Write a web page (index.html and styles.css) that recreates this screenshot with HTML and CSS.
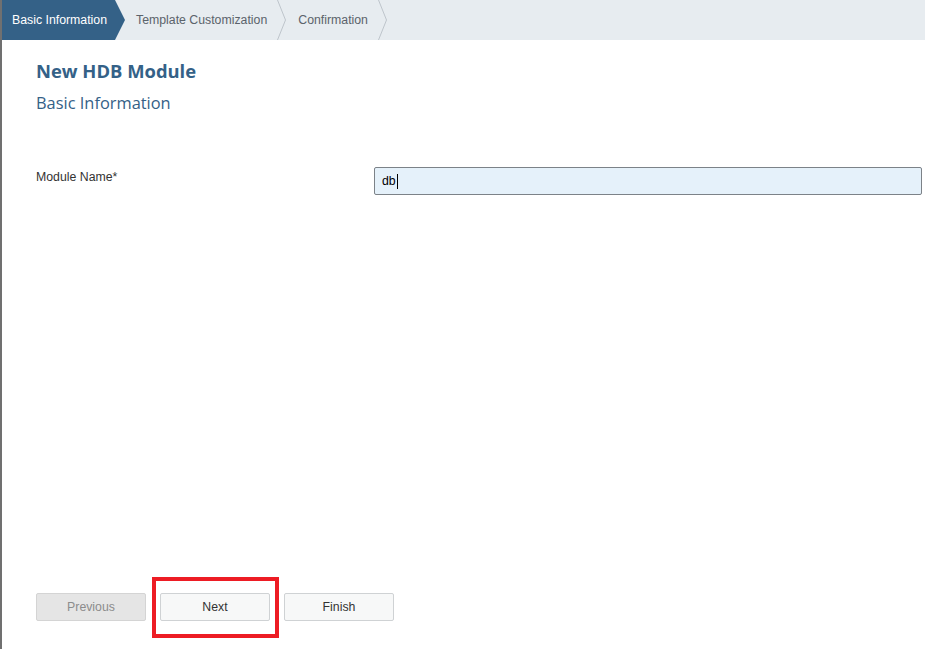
FILE: index.html
```html
<!DOCTYPE html>
<html lang="en">
<head>
<meta charset="utf-8">
<title>New HDB Module</title>
<link rel="stylesheet" href="styles.css">
</head>
<body>
<div class="page">
  <nav class="steps">
    <div class="step step-active">
      <span class="step-label">Basic Information</span>
      <svg class="arrow" width="10" height="40" viewBox="0 0 10 40"><polygon points="0,0 10,20 0,40" fill="#346187"/></svg>
    </div>
    <div class="step">
      <span class="step-label">Template Customization</span>
      <svg class="chev" width="10" height="40" viewBox="0 0 10 40"><polyline points="0.5,0 8.5,20 0.5,40" fill="none" stroke="#bfc5cb" stroke-width="1"/></svg>
    </div>
    <div class="step">
      <span class="step-label">Confirmation</span>
      <svg class="chev" width="10" height="40" viewBox="0 0 10 40"><polyline points="0.5,0 8.5,20 0.5,40" fill="none" stroke="#bfc5cb" stroke-width="1"/></svg>
    </div>
  </nav>
  <main class="content">
    <h1 class="title">New HDB Module</h1>
    <h2 class="subtitle">Basic Information</h2>
    <div class="form-row">
      <label class="field-label" for="modname">Module Name*</label>
      <div class="field-input"><span class="value">db</span><span class="caret"></span></div>
    </div>
  </main>
  <footer class="actions">
    <button class="btn btn-disabled">Previous</button>
    <div class="highlight-wrap">
      <button class="btn">Next</button>
      <div class="highlight"></div>
    </div>
    <button class="btn">Finish</button>
  </footer>
</div>
</body>
</html>
```
FILE: styles.css
```css
html, body {
  margin: 0;
  padding: 0;
  height: 100%;
  background: #ffffff;
}
body {
  font-family: "Liberation Sans", Arial, sans-serif;
  overflow: hidden;
}
.page {
  height: 100vh;
  box-sizing: border-box;
  border-left: 2px solid #707070;
  display: flex;
  flex-direction: column;
}
.steps {
  height: 40px;
  flex: 0 0 40px;
  background: #e7ecf0;
  display: flex;
  align-items: stretch;
}
.step {
  display: flex;
  align-items: center;
  font-size: 12.3px;
  color: #5b636b;
}
.step-active {
  background: linear-gradient(to right, #346187 0, #346187 calc(100% - 10px), #e7ecf0 calc(100% - 10px));
  color: #ffffff;
  padding-left: 10px;
}
.step-active .step-label {
  padding-right: 8px;
}
.arrow {
  display: block;
}
.step + .step {
  padding-left: 11px;
}
.step + .step .step-label {
  padding-right: 10px;
}
.chev {
  display: block;
}
.content {
  flex: 1;
  padding: 19px 3px 0 34px;
}
.title {
  margin: 0;
  font-family: "Open Sans", "Noto Sans", sans-serif;
  font-weight: 700;
  font-size: 18.4px;
  line-height: 24px;
  color: #346187;
}
.subtitle {
  margin: 8px 0 0;
  font-family: "Open Sans", "Noto Sans", sans-serif;
  font-weight: 400;
  font-size: 16.4px;
  line-height: 24px;
  color: #346187;
}
.form-row {
  margin-top: 52px;
  display: flex;
  align-items: flex-start;
}
.field-label {
  width: 338px;
  flex: 0 0 338px;
  font-size: 12.3px;
  line-height: 20px;
  color: #333333;
}
.field-input {
  flex: 1;
  height: 28px;
  box-sizing: border-box;
  background: #e5f1fa;
  border: 1px solid #7c8288;
  border-radius: 2px;
  display: flex;
  align-items: center;
  padding-left: 7px;
  font-size: 12.3px;
  color: #000000;
}
.caret {
  display: inline-block;
  width: 1px;
  height: 15px;
  background: #000;
  margin-left: 1px;
}
.actions {
  display: flex;
  gap: 14px;
  padding: 0 0 28px 34px;
}
.btn {
  width: 110px;
  height: 28px;
  box-sizing: border-box;
  border: 1px solid #cfd2d4;
  border-radius: 2px;
  background: #f7f8f8;
  font-family: "Liberation Sans", Arial, sans-serif;
  font-size: 12.3px;
  color: #333333;
  padding: 0;
}
.btn-disabled {
  background: #e5e5e5;
  color: #8c8c8c;
  border-color: #d4d4d4;
}
.highlight-wrap {
  position: relative;
  display: flex;
}
.highlight {
  position: absolute;
  left: -8px;
  top: -16px;
  width: 127px;
  height: 61px;
  box-sizing: border-box;
  border: 4px solid #ed1c24;
  pointer-events: none;
}
```
